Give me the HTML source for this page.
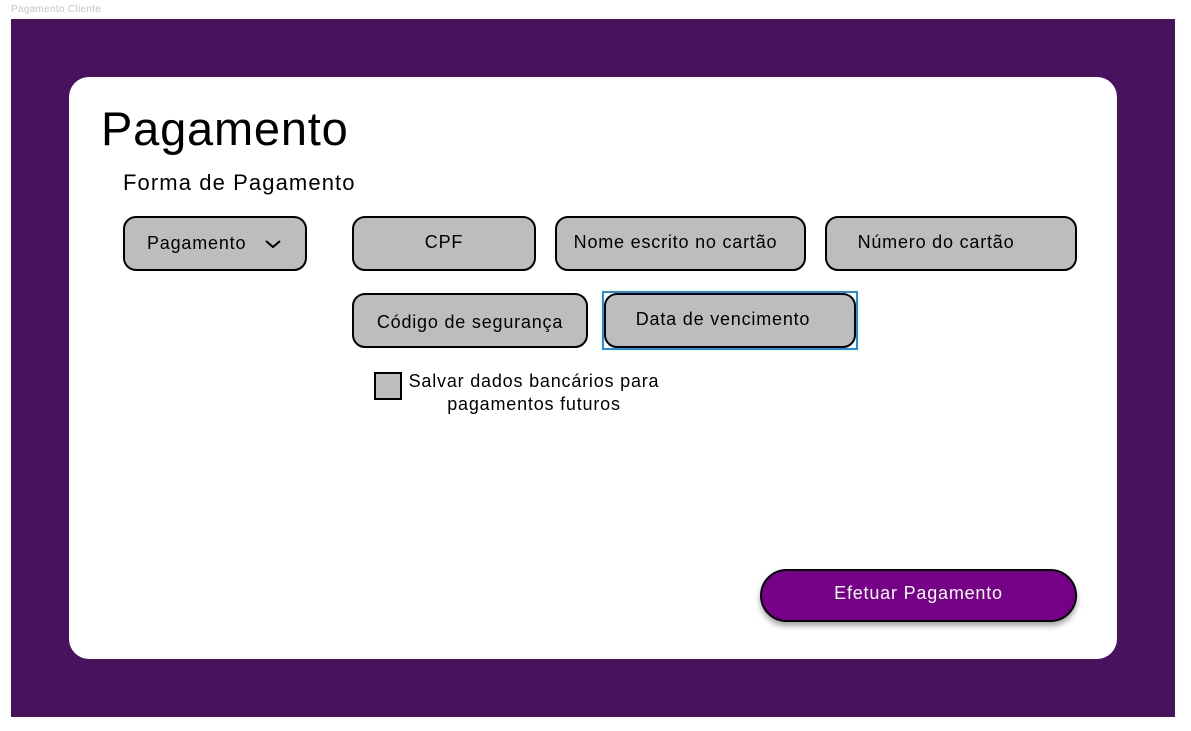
<!DOCTYPE html>
<html><head><style>
body{margin:0;width:1191px;height:731px;background:#fff;position:relative;font-family:"Liberation Sans",sans-serif;overflow:hidden}
.a{position:absolute}
.box{position:absolute;box-sizing:border-box;background:#bdbdbd;border:2px solid #000;border-radius:13px;font-size:18px;letter-spacing:0.8px;color:#000;display:flex;align-items:center;justify-content:center}
</style></head><body>
<div class="a" style="left:11px;top:4px;font-size:10px;color:#c4c4c4;letter-spacing:0.3px">Pagamento Cliente</div>
<div class="a" style="left:11px;top:19px;width:1164px;height:698px;background:#48125f"></div>
<div class="a" style="left:69px;top:77px;width:1048px;height:582px;background:#fff;border-radius:20px"></div>
<div class="a" style="left:101px;top:101px;font-size:47px;letter-spacing:0.8px">Pagamento</div>
<div class="a" style="left:123px;top:170px;font-size:22px;letter-spacing:1.1px">Forma de Pagamento</div>
<div class="box" style="left:123px;top:216px;width:184px;height:55px;justify-content:flex-start;padding-left:22px">Pagamento
<svg style="position:absolute;left:139px;top:20px" width="18" height="12" viewBox="0 0 18 12"><path d="M2 3l7 6 7-6" fill="none" stroke="#000" stroke-width="2"/></svg></div>
<div class="box" style="left:352px;top:216px;width:184px;height:55px;padding-bottom:3px">CPF</div>
<div class="box" style="left:555px;top:216px;width:251px;height:55px;padding-bottom:3px;padding-right:10px">Nome escrito no cartão</div>
<div class="box" style="left:825px;top:216px;width:252px;height:55px;padding-bottom:3px;padding-right:30px">Número do cartão</div>
<div class="box" style="left:352px;top:293px;width:236px;height:55px;padding-top:3px">Código de segurança</div>
<div class="a" style="left:602px;top:291px;width:252px;height:55px;border:2px solid #1e8fe6"></div>
<div class="box" style="left:604px;top:293px;width:252px;height:55px;padding-bottom:2px;padding-right:14px">Data de vencimento</div>
<div class="a" style="left:374px;top:372px;width:28px;height:28px;box-sizing:border-box;background:#bdbdbd;border:2px solid #000"></div>
<div class="a" style="left:403px;top:370px;width:262px;text-align:center;font-size:18px;line-height:23px;letter-spacing:0.8px">Salvar dados bancários para<br>pagamentos futuros</div>
<div class="box" style="left:760px;top:569px;width:317px;height:53px;border-radius:27px;background:#760087;color:#fff;box-shadow:0 4px 6px rgba(0,0,0,.35);padding-bottom:4px">Efetuar Pagamento</div>
</body></html>
